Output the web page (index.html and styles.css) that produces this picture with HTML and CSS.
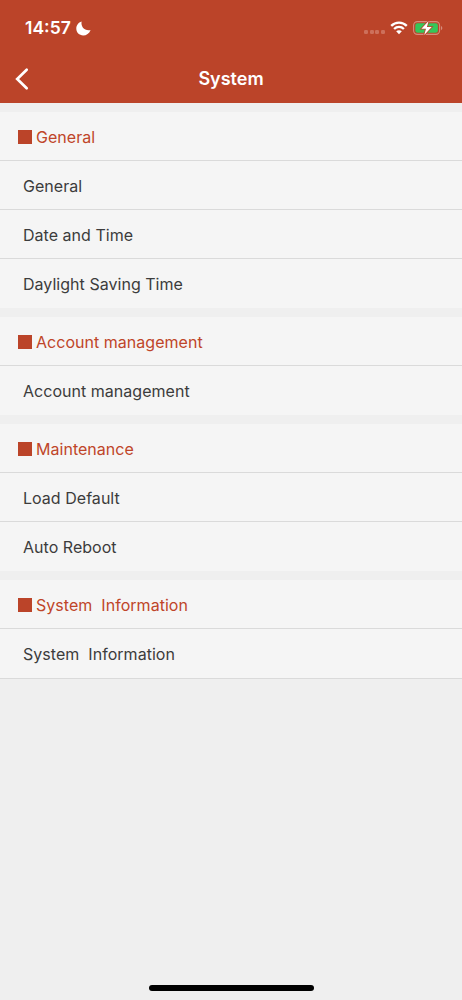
FILE: index.html
```
<!DOCTYPE html>
<html lang="en">
<head>
    <meta charset="UTF-8">
    <meta name="viewport" content="width=device-width, initial-scale=1.0">
    <title>System</title>
    <link rel="stylesheet" href="styles.css">
</head>
<body>
    <header>
        <div class="status-bar">
            <span class="time">14:57</span>
            <svg class="moon" width="15" height="15" viewBox="0 0 15 15">
                <path d="M5.6 0.4C4.6 5.6 8.6 10.2 14.6 9C13.2 12.6 10.4 14.5 7.2 14.5C3.2 14.5 0.3 11.5 0.3 7.6C0.3 4.3 2.4 1.4 5.6 0.4Z" fill="#fff"/>
            </svg>
            <div class="status-icons">
                <div class="signal"><i></i><i></i><i></i><i></i></div>
                <svg class="wifi" width="18" height="14" viewBox="0 0 18 14">
                    <path d="M1.2 4.9C5.6 0.4 12.4 0.4 16.8 4.9M4.1 8C6.9 5.2 11.1 5.2 13.9 8" fill="none" stroke="#fff" stroke-width="2.3"/>
                    <path d="M6.2 10.3C7.8 8.8 10.2 8.8 11.8 10.3L9 13.2Z" fill="#fff"/>
                </svg>
                <svg class="battery" width="30" height="16" viewBox="0 0 30 16">
                    <rect x="0.6" y="1.6" width="26" height="12.8" rx="3.8" fill="none" stroke="#d58c7c" stroke-width="1.1"/>
                    <path d="M28 6v4.2c1.8-.6 1.8-3.6 0-4.2z" fill="#d58c7c"/>
                    <rect x="2.3" y="3.3" width="22.6" height="9.4" rx="2.2" fill="#34c759"/>
                    <path d="M15.6 1L8.4 8.8h4.6L11.2 15L18.7 7.1h-4.8z" fill="#fff" stroke="#bb4429" stroke-width="1.6" paint-order="stroke"/>
                </svg>
            </div>
        </div>
        <div class="nav-bar">
            <svg class="back" width="14" height="24" viewBox="0 0 14 24">
                <path d="M11.7 2.7L2.2 12L11.7 21.3" fill="none" stroke="#fff" stroke-width="2.7" stroke-linecap="round"/>
            </svg>
            <h1>System</h1>
        </div>
    </header>

    <main>
        <section>
            <h2>General</h2>
            <ul>
                <li>General</li>
                <li>Date and Time</li>
                <li>Daylight Saving Time</li>
            </ul>
        </section>
        <section>
            <h2>Account management</h2>
            <ul>
                <li>Account management</li>
            </ul>
        </section>
        <section>
            <h2>Maintenance</h2>
            <ul>
                <li>Load Default</li>
                <li>Auto Reboot</li>
            </ul>
        </section>
        <section>
            <h2>System  Information</h2>
            <ul>
                <li>System  Information</li>
            </ul>
        </section>
    </main>

    <div class="home-indicator"></div>
</body>
</html>
```

FILE: styles.css
```
* {
    box-sizing: border-box;
    margin: 0;
    padding: 0;
}

body {
    display: flex;
    flex-direction: column;
    height: 100vh;
    background-color: #efefef;
    font-family: Inter, sans-serif;
    color: #3c3c3c;
}

/* header */
header {
    height: 103px;
    background-color: #bb4429;
    color: #fff;
}

.status-bar {
    display: flex;
    align-items: center;
    height: 56px;
    padding: 0 19px 0 25px;
}

.time {
    width: 47px;
    padding-bottom: 1px;
    font-size: 17.5px;
    font-weight: 600;
    white-space: nowrap;
}

.moon {
    margin-left: 4px;
}

.status-icons {
    display: flex;
    align-items: center;
    margin-left: auto;
}

.signal {
    display: flex;
    gap: 1.6px;
    margin: 8px 5px 0 0;
}

.signal i {
    width: 4px;
    height: 4px;
    border-radius: 1.2px;
    background-color: #cd705b;
}

.battery {
    margin-left: 5px;
}

.nav-bar {
    display: grid;
    grid-template-columns: 40px 1fr 40px;
    align-items: center;
    height: 45px;
}

.back {
    margin-left: 14.5px;
}

h1 {
    font-size: 18px;
    font-weight: 600;
    text-align: center;
}

/* settings list */
section {
    margin-top: 9px;
    background-color: #f5f5f5;
}

section:last-child {
    border-bottom: 1px solid #dadada;
}

h2,
li {
    display: flex;
    align-items: center;
    height: 49px;
    font-size: 16px;
    font-weight: 400;
    letter-spacing: 0.03px;
    white-space: pre;
}

h2 {
    padding-left: 18px;
    color: #bf4529;
}

h2::before {
    content: "";
    width: 14px;
    height: 14px;
    margin-right: 4px;
    background-color: #bb4429;
}

li {
    padding: 2px 0 0 23px;
    border-top: 1px solid #dadada;
}

ul {
    margin-top: -1px;
    padding-bottom: 1px;
    list-style: none;
}

.home-indicator {
    width: 165px;
    height: 6px;
    margin: auto auto 9px;
    border-radius: 3px;
    background-color: #000;
}
```
